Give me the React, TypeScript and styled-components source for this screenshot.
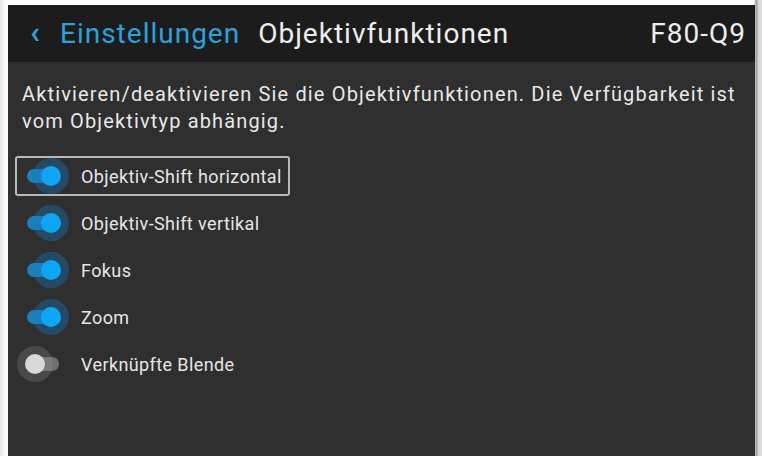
import React, { useState } from "react";
import styled, { createGlobalStyle } from "styled-components";

const GlobalStyle = createGlobalStyle`
  html, body {
    margin: 0;
    padding: 0;
    background: #f4f4f4;
    font-family: Roboto, "Liberation Sans", sans-serif;
  }
`;

type Feature = {
  label: string;
  enabled: boolean;
};

const initialFeatures: Feature[] = [
  { label: "Objektiv-Shift horizontal", enabled: true },
  { label: "Objektiv-Shift vertikal", enabled: true },
  { label: "Fokus", enabled: true },
  { label: "Zoom", enabled: true },
  { label: "Verknüpfte Blende", enabled: false },
];

const App: React.FC = () => {
  const [features, setFeatures] = useState<Feature[]>(initialFeatures);
  const [selected] = useState(0);

  const toggle = (index: number) => {
    setFeatures(features.map((f, i) => (i === index ? { ...f, enabled: !f.enabled } : f)));
  };

  return (
    <>
      <GlobalStyle />
      <Page>
        <Screen>
          <Header>
            <BackLink>
              <Chevron>‹</Chevron>
              <span>Einstellungen</span>
            </BackLink>
            <Title>Objektivfunktionen</Title>
            <Model>F80-Q9</Model>
          </Header>
          <Body>
            <Description>
              Aktivieren/deaktivieren Sie die Objektivfunktionen. Die Verfügbarkeit ist vom
              Objektivtyp abhängig.
            </Description>
            <List>
              {features.map((item, index) => (
                <Row key={item.label} selected={index === selected} onClick={() => toggle(index)}>
                  <Switch>
                    <Track on={item.enabled} />
                    <Halo on={item.enabled} />
                    <Knob on={item.enabled} />
                  </Switch>
                  <Label>{item.label}</Label>
                </Row>
              ))}
            </List>
          </Body>
        </Screen>
      </Page>
    </>
  );
};

const Page = styled.div`
  width: 762px;
  height: 456px;
  padding: 5px 8px 0 8px;
  box-sizing: border-box;
  background: linear-gradient(to right, #e6e6e6 0, #ffffff 6px, #ffffff 754px, #9a9a9a 756px, #dcdcdc 759px);
  overflow: hidden;
`;

const Screen = styled.div`
  width: 747px;
  height: 100%;
  display: flex;
  flex-direction: column;
  background: #2f2f2f;
`;

const Header = styled.div`
  height: 57px;
  flex-shrink: 0;
  display: flex;
  align-items: center;
  padding: 0 9px 0 22px;
  background: #1c1c1c;
  font-size: 28px;
  letter-spacing: 1px;
`;

const BackLink = styled.div`
  display: flex;
  align-items: center;
  color: #2aa2dc;
  gap: 19px;
`;

const Chevron = styled.span`
  font-size: 32px;
  font-weight: 700;
  line-height: 1;
  margin-top: -4px;
`;

const Title = styled.div`
  margin-left: 18px;
  color: #ededed;
  flex: 1;
`;

const Model = styled.div`
  color: #ededed;
`;

const Body = styled.div`
  flex: 1;
  padding: 19px 10px 0 14px;
`;

const Description = styled.p`
  margin: 0;
  color: #e8e8e8;
  font-size: 20px;
  letter-spacing: 1.15px;
  line-height: 27px;
`;

const List = styled.div`
  margin-top: 21px;
  display: flex;
  flex-direction: column;
  gap: 7px;
`;

const Row = styled.div<{ selected: boolean }>`
  width: 275px;
  height: 40px;
  box-sizing: border-box;
  display: flex;
  align-items: center;
  padding-left: 6px;
  margin-left: -7px;
  border: 2px solid ${(p) => (p.selected ? "#b9b9b9" : "transparent")};
  border-radius: 3px;
  cursor: pointer;
`;

const Switch = styled.div`
  position: relative;
  width: 46px;
  height: 36px;
  flex-shrink: 0;
  margin-right: 12px;
`;

const Track = styled.div<{ on: boolean }>`
  position: absolute;
  left: 4px;
  top: 11px;
  width: 32px;
  height: 14px;
  border-radius: 7px;
  background: ${(p) => (p.on ? "#1b7fb8" : "#6f6f6f")};
`;

const Halo = styled.div<{ on: boolean }>`
  position: absolute;
  top: 0;
  left: ${(p) => (p.on ? "10px" : "-6px")};
  width: 36px;
  height: 36px;
  border-radius: 50%;
  background: ${(p) => (p.on ? "rgba(20, 130, 200, 0.35)" : "rgba(150, 150, 150, 0.25)")};
`;

const Knob = styled.div<{ on: boolean }>`
  position: absolute;
  top: 8px;
  left: ${(p) => (p.on ? "18px" : "2px")};
  width: 20px;
  height: 20px;
  border-radius: 50%;
  background: ${(p) => (p.on ? "#0ea6f4" : "#d9d9d9")};
`;

const Label = styled.span`
  color: #e6e6e6;
  font-size: 18px;
  letter-spacing: 0.4px;
  white-space: nowrap;
`;

export default App;
